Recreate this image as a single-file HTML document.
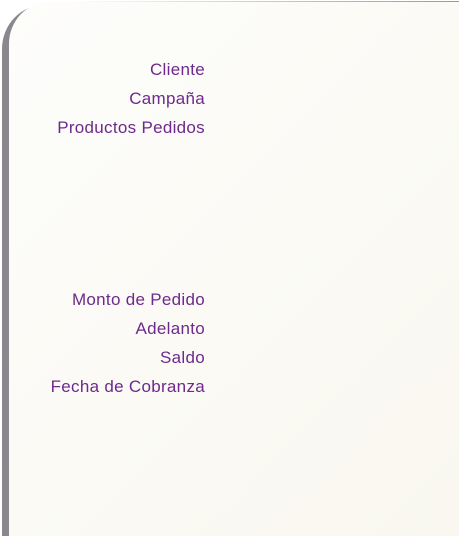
<!DOCTYPE html>
<html><head><meta charset="utf-8"><style>
html,body{margin:0;padding:0;width:461px;height:536px;background:#fff;overflow:hidden;font-family:"Liberation Sans",sans-serif}
.edge{position:absolute;left:2px;top:5px;width:80px;height:531px;background:#8a888e;border-top-left-radius:42px 44px}
.panel{position:absolute;left:9px;top:2px;width:450px;height:534px;background:linear-gradient(135deg,#fdfdfb 0%,#f9f7ef 100%);border-top-left-radius:40px 42px}
.tl{position:absolute;left:70px;top:1px;width:389px;height:1px;background:linear-gradient(90deg,rgba(160,160,160,0),#999)}
.l{position:absolute;right:256px;color:#6d2a8c;font-size:17px;letter-spacing:0.3px;line-height:20px;white-space:nowrap}
</style></head><body>
<div class="edge"></div>
<div class="panel"></div>
<div class="tl"></div>
<div class="l" style="top:60px">Cliente</div>
<div class="l" style="top:89px">Campaña</div>
<div class="l" style="top:118px">Productos Pedidos</div>
<div class="l" style="top:290px">Monto de Pedido</div>
<div class="l" style="top:319px">Adelanto</div>
<div class="l" style="top:348px">Saldo</div>
<div class="l" style="top:377px">Fecha de Cobranza</div>
</body></html>
